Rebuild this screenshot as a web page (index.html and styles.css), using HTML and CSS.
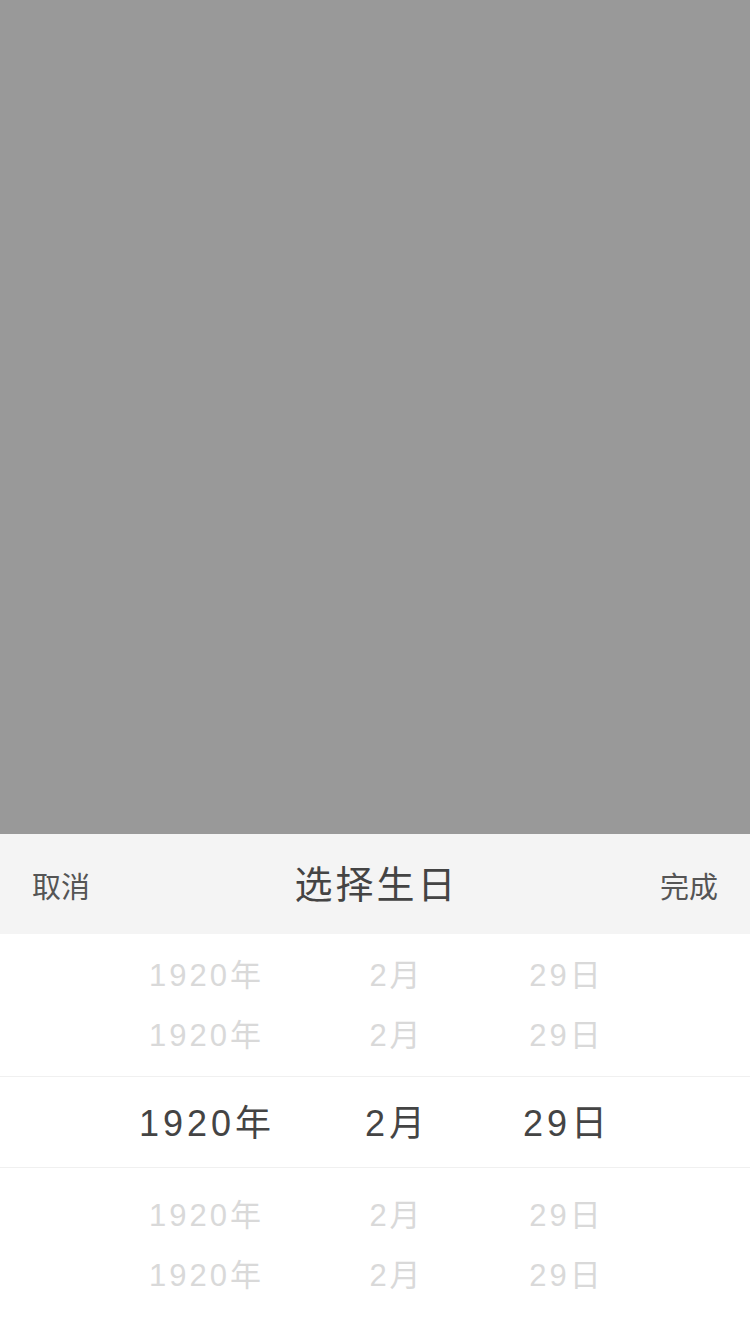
FILE: index.html
```html
<!DOCTYPE html>
<html lang="zh-CN">
<head>
<meta charset="utf-8">
<title>选择生日</title>
<link rel="stylesheet" href="styles.css">
</head>
<body>
<div class="screen">
  <div class="mask"></div>
  <div class="sheet">
    <div class="bar">
      <span class="btn">取消</span>
      <span class="title">选择生日</span>
      <span class="btn">完成</span>
    </div>
    <div class="picker">
      <div class="row faded"><span>1920年</span><span>2月</span><span>29日</span></div>
      <div class="row faded"><span>1920年</span><span>2月</span><span>29日</span></div>
      <div class="row selected"><span>1920年</span><span>2月</span><span>29日</span></div>
      <div class="row faded lower"><span>1920年</span><span>2月</span><span>29日</span></div>
      <div class="row faded"><span>1920年</span><span>2月</span><span>29日</span></div>
    </div>
  </div>
</div>
</body>
</html>
```

FILE: styles.css
```css
html, body {
  margin: 0;
  padding: 0;
}
body {
  font-family: "Liberation Sans", "Noto Sans CJK SC", sans-serif;
  background: #fff;
}
.screen {
  width: 750px;
  height: 1334px;
  display: flex;
  flex-direction: column;
  overflow: hidden;
}
.mask {
  height: 834px;
  background: #999999;
  flex: none;
}
.sheet {
  flex: 1;
  display: flex;
  flex-direction: column;
  background: #fff;
}
.bar {
  height: 100px;
  background: #f4f4f4;
  display: flex;
  align-items: center;
  justify-content: space-between;
  padding: 0 32px 0 32px;
  flex: none;
}
.btn {
  font-size: 29px;
  color: #555;
  font-family: "Noto Sans CJK SC", sans-serif;
  line-height: 1;
  padding-top: 2px;
}
.title {
  font-size: 38px;
  color: #444;
  font-family: "Noto Sans CJK SC", sans-serif;
  letter-spacing: 3px;
  line-height: 1;
  margin-left: 3px;
  margin-top: -4px;
}
.picker {
  padding-top: 11px;
  display: flex;
  flex-direction: column;
}
.row {
  display: grid;
  grid-template-columns: 230px 150px 190px;
  padding: 0 90px;
  align-items: center;
  height: 60px;
  box-sizing: border-box;
}
.row span {
  text-align: center;
  padding-left: 3px;
  letter-spacing: 3px;
  white-space: nowrap;
}
.faded {
  font-size: 31px;
  color: #d9d9d9;
  padding-bottom: 6px;
}
.selected {
  height: 92px;
  margin-top: 11px;
  border-top: 1px solid #f0f0f0;
  border-bottom: 1px solid #f0f0f0;
  font-size: 36px;
  color: #444;
  padding-bottom: 4px;
}
.selected span {
  letter-spacing: 4px;
  padding-left: 4px;
}
.lower {
  margin-top: 17px;
}
```
